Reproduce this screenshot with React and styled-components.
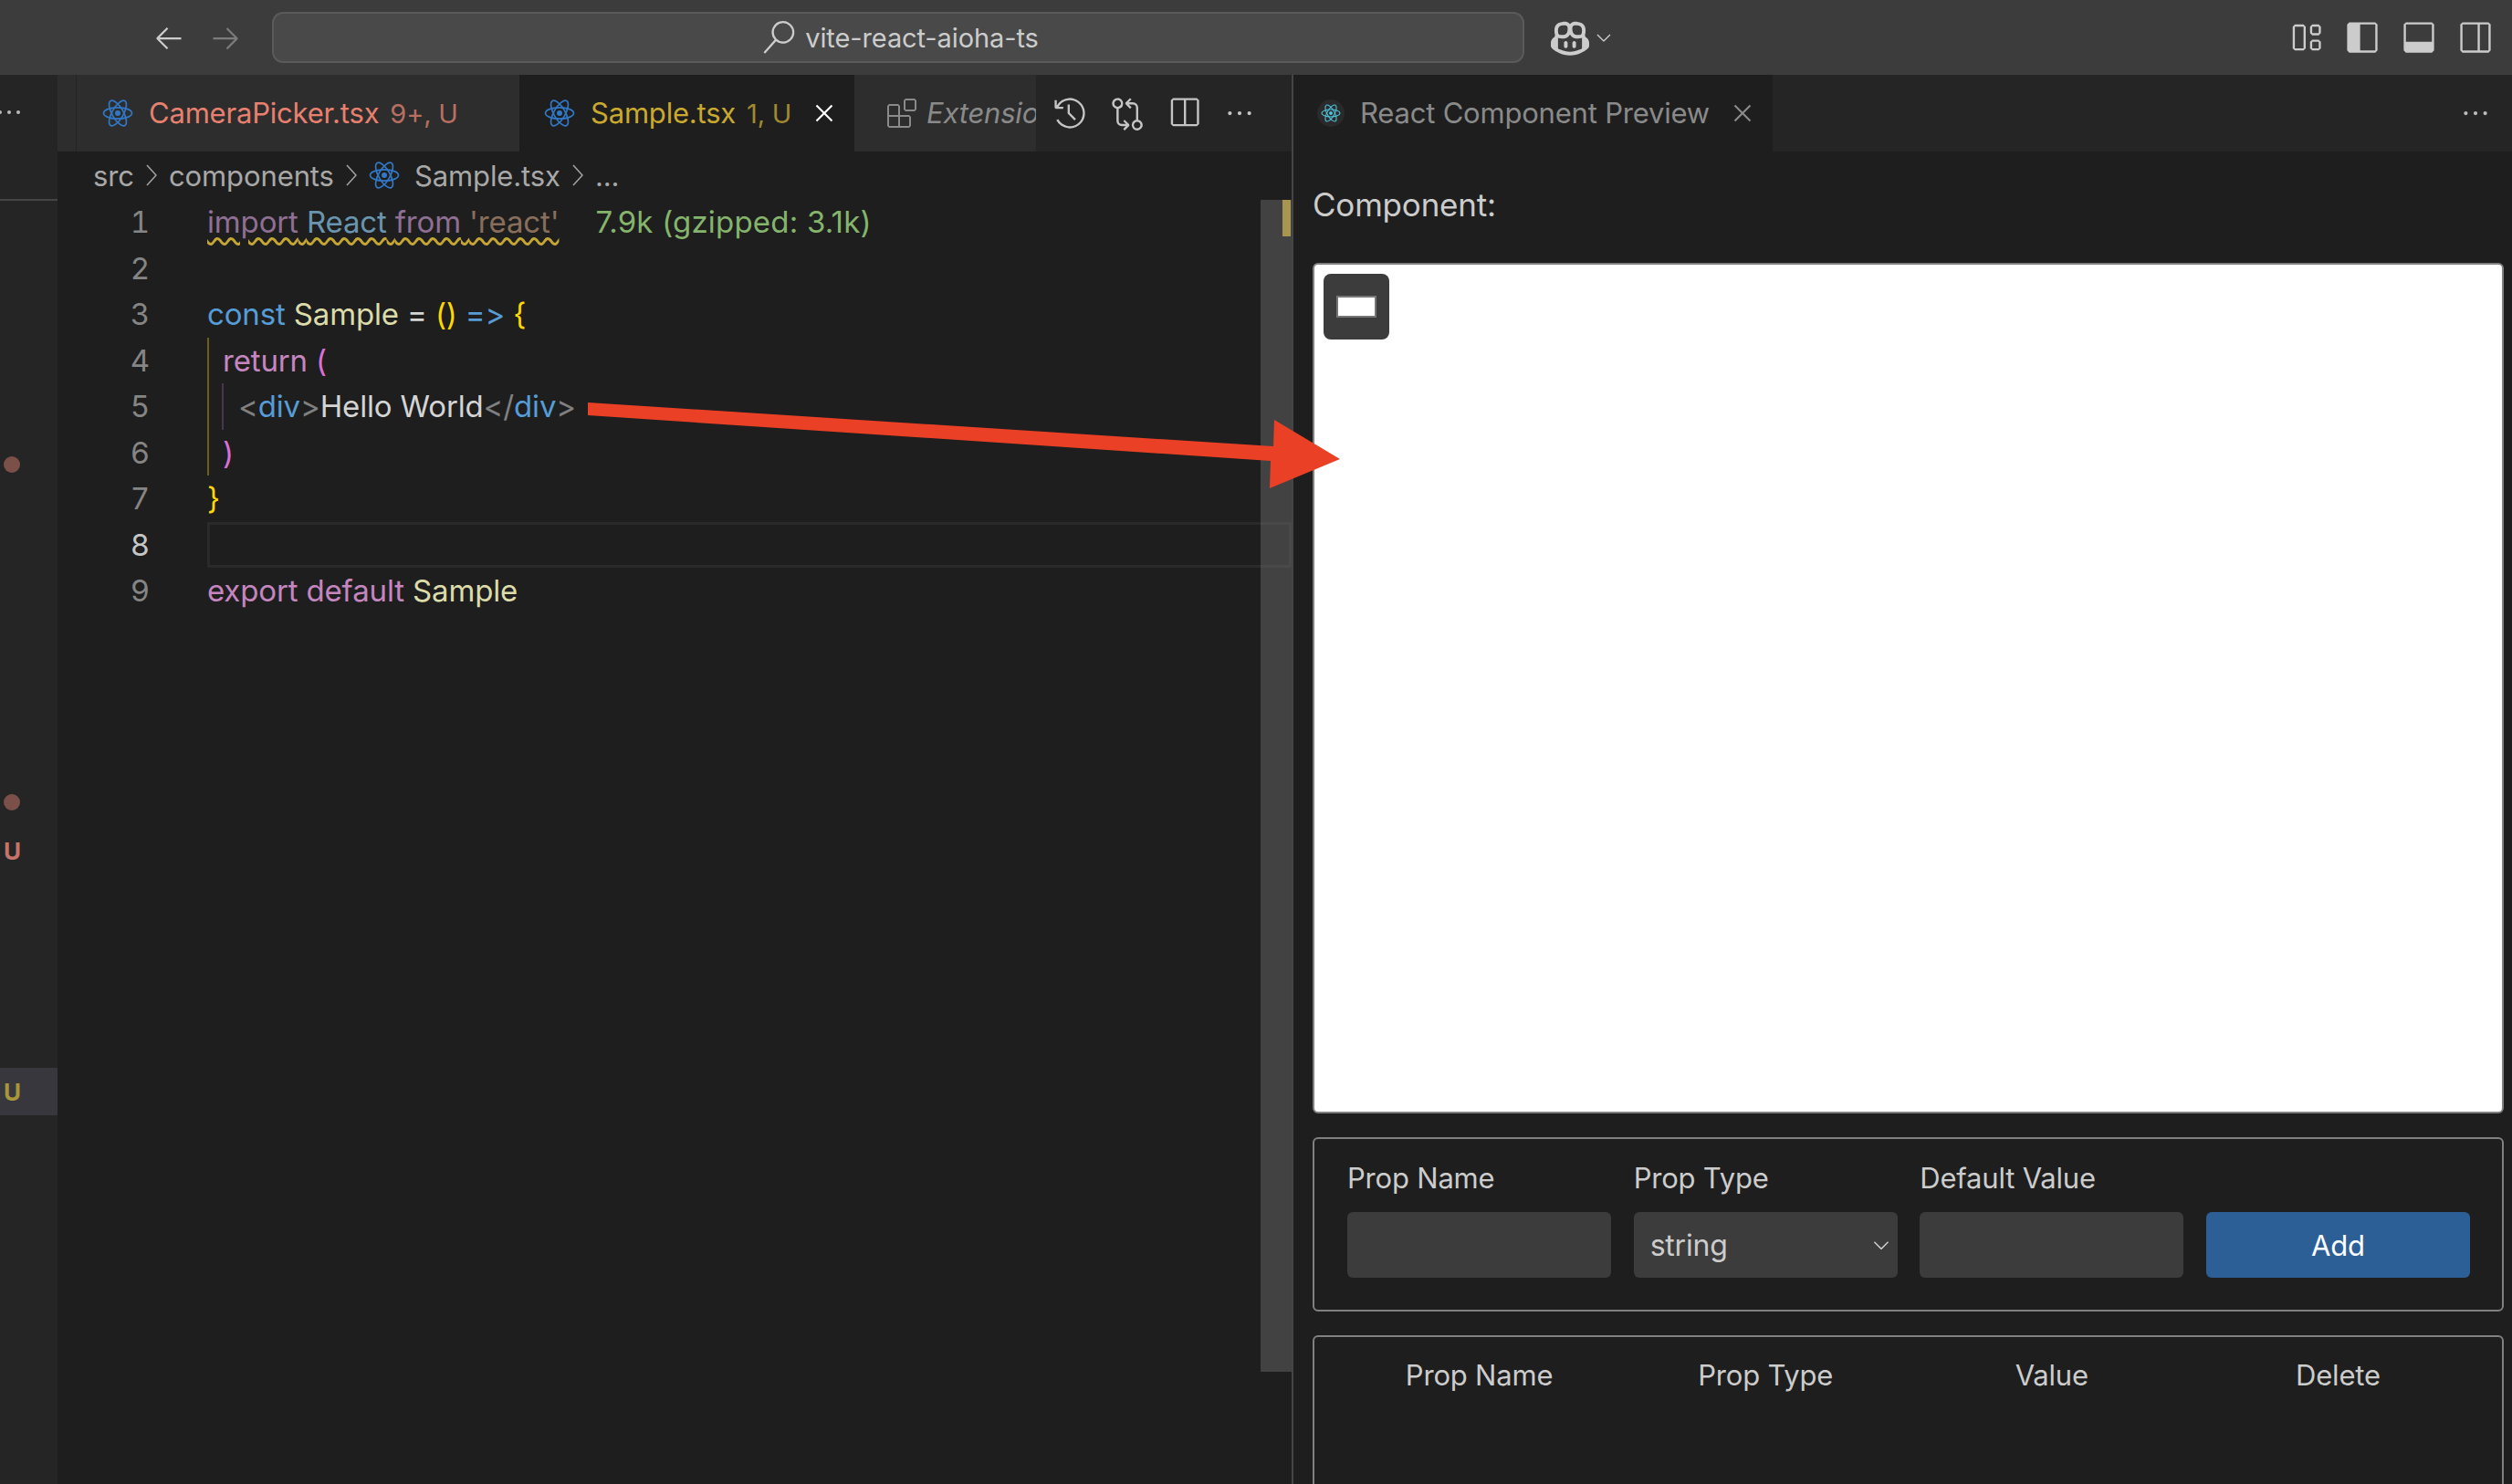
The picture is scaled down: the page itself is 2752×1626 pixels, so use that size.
import React from 'react';
import styled, { createGlobalStyle } from 'styled-components';
import {
  VscArrowLeft,
  VscArrowRight,
  VscSearch,
  VscCopilot,
  VscChevronDown,
  VscLayout,
  VscLayoutSidebarLeft,
  VscLayoutPanel,
  VscLayoutSidebarRightOff,
  VscClose,
  VscExtensions,
  VscHistory,
  VscGitCompare,
  VscSplitHorizontal,
  VscEllipsis
} from 'react-icons/vsc';

const UI_FONT = 'Inter, "Noto Sans", sans-serif';

const GlobalStyle = createGlobalStyle`
  html, body {
    margin: 0;
    padding: 0;
    background: #1e1e1e;
  }
  * {
    box-sizing: border-box;
  }
`;

const ReactIcon = ({ color = '#3178c6', size = 34 }) => (
  <svg width={size} height={size} viewBox="0 0 34 34" fill="none" stroke={color} strokeWidth="1.7">
    <ellipse cx="17" cy="17" rx="15.5" ry="6.2" />
    <ellipse cx="17" cy="17" rx="15.5" ry="6.2" transform="rotate(60 17 17)" />
    <ellipse cx="17" cy="17" rx="15.5" ry="6.2" transform="rotate(120 17 17)" />
    <circle cx="17" cy="17" r="3" fill={color} stroke="none" />
  </svg>
);

const Crumb = () => (
  <svg width="12" height="24" viewBox="0 0 12 24" fill="none" stroke="#a0a0a0" strokeWidth="1.6">
    <polyline points="1,1 11,12 1,23" />
  </svg>
);

const App = () => (
  <Page>
    <GlobalStyle />
    <TitleBar>
      <NavIcon $dim={false}><VscArrowLeft size={36} /></NavIcon>
      <NavIcon $dim><VscArrowRight size={36} /></NavIcon>
      <SearchBox>
        <VscSearch size={36} />
        <span>vite-react-aioha-ts</span>
      </SearchBox>
      <CopilotButton>
        <VscCopilot size={42} />
        <VscChevronDown size={24} />
      </CopilotButton>
      <LayoutIcons>
        <VscLayout size={38} />
        <VscLayoutSidebarLeft size={38} />
        <VscLayoutPanel size={38} />
        <VscLayoutSidebarRightOff size={38} />
      </LayoutIcons>
    </TitleBar>

    <Workbench>
      <Sidebar>
        <SidebarHead>
          <VscEllipsis size={32} />
        </SidebarHead>
        <SidebarMark $top={263}><Dot /></SidebarMark>
        <SidebarMark $top={318}><Dot /></SidebarMark>
        <SidebarMark $top={1} $color="#c4746a">U</SidebarMark>
        <SidebarMark $top={212} $color="#a8963c" $selected>U</SidebarMark>
      </Sidebar>

      <EditorGroup>
        <TabBar>
          <Tab $width={20} />
          <Tab $width={486} $pad={28} $edge>
            <ReactIcon />
            <TabTitle $color="#e8806f">CameraPicker.tsx</TabTitle>
            <TabBadge $color="#b86f62">9+, U</TabBadge>
          </Tab>
          <Tab $width={367} $pad={27} $active>
            <ReactIcon />
            <TabTitle $color="#c9a92f">Sample.tsx</TabTitle>
            <TabBadge $color="#a08a30">1, U</TabBadge>
            <TabClose $color="#fff"><VscClose size={34} /></TabClose>
          </Tab>
          <Tab $width={199} $pad={36}>
            <VscExtensions size={32} color="#8a8a8a" />
            <TabTitle $color="#8a8a8a" $italic $gap={11}>Extensio</TabTitle>
          </Tab>
          <TabActions>
            <VscHistory size={38} />
            <VscGitCompare size={38} />
            <VscSplitHorizontal size={38} />
            <VscEllipsis size={34} />
          </TabActions>
        </TabBar>

        <Breadcrumbs>
          <span>src</span>
          <Crumb />
          <span>components</span>
          <Crumb />
          <ReactIcon />
          <CrumbFile>Sample.tsx</CrumbFile>
          <Crumb />
          <span>...</span>
        </Breadcrumbs>

        <EditorBody>
          <Gutter>
            {[1, 2, 3, 4, 5, 6, 7, 8, 9].map(n => (
              <LineNumber key={n} $current={n === 8}>{n}</LineNumber>
            ))}
          </Gutter>
          <CodeColumn>
            <Line>
              <Squiggle>
                <Tok $c="#8f6f93">import</Tok> <Tok $c="#6a95ae">React</Tok> <Tok $c="#8f6f93">from</Tok> <Tok $c="#8a6e5c">'react'</Tok>
              </Squiggle>
              <BundleSize>7.9k (gzipped: 3.1k)</BundleSize>
            </Line>
            <Line />
            <Line>
              <Tok $c="#569cd6">const</Tok> <Tok $c="#dcdcaa">Sample</Tok> <Tok $c="#d4d4d4">=</Tok> <Tok $c="#ffd700">()</Tok> <Tok $c="#569cd6">=&gt;</Tok> <Tok $c="#ffd700">{'{'}</Tok>
            </Line>
            <IndentBlock $color="#6b5f20">
              <Line>
                <Tok $c="#c586c0">return</Tok> <Tok $c="#da70d6">(</Tok>
              </Line>
              <IndentBlock $color="#4a3550">
                <Line>
                  <Tok $c="#808080">&lt;</Tok><Tok $c="#569cd6">div</Tok><Tok $c="#808080">&gt;</Tok><Tok $c="#d4d4d4">Hello World</Tok><Tok $c="#808080">&lt;/</Tok><Tok $c="#569cd6">div</Tok><Tok $c="#808080">&gt;</Tok>
                </Line>
              </IndentBlock>
              <Line>
                <Tok $c="#da70d6">)</Tok>
              </Line>
            </IndentBlock>
            <Line>
              <Tok $c="#ffd700">{'}'}</Tok>
            </Line>
            <CurrentLine />
            <Line>
              <Tok $c="#c586c0">export default</Tok> <Tok $c="#dcdcaa">Sample</Tok>
            </Line>
          </CodeColumn>
          <Scrollbar>
            <ScrollMarker />
          </Scrollbar>
        </EditorBody>
      </EditorGroup>

      <GroupDivider />

      <PreviewGroup>
        <PreviewTabBar>
          <PreviewTab>
            <PreviewIcon><ReactIcon color="#4fc3dc" size={22} /></PreviewIcon>
            <TabTitle $color="#8a8a8a">React Component Preview</TabTitle>
            <TabClose $color="#8a8a8a"><VscClose size={34} /></TabClose>
          </PreviewTab>
          <PreviewMore><VscEllipsis size={34} /></PreviewMore>
        </PreviewTabBar>

        <PreviewBody>
          <SectionTitle>Component:</SectionTitle>
          <Canvas>
            <RenderedButton>
              <RenderedInner />
            </RenderedButton>
          </Canvas>

          <OutlineBox $height={191} $pad="23px 35px 0 36px">
            <FieldGrid>
              <FieldLabel>Prop Name</FieldLabel>
              <FieldLabel>Prop Type</FieldLabel>
              <FieldLabel>Default Value</FieldLabel>
              <span />
              <TextField />
              <SelectWrap>
                <SelectField defaultValue="string">
                  <option value="string">string</option>
                  <option value="number">number</option>
                  <option value="boolean">boolean</option>
                </SelectField>
                <SelectChevron><VscChevronDown size={26} /></SelectChevron>
              </SelectWrap>
              <TextField />
              <AddButton>Add</AddButton>
            </FieldGrid>
          </OutlineBox>

          <OutlineBox $height={300} $pad="22px 35px 0 36px">
            <FieldGrid>
              <ColumnHead>Prop Name</ColumnHead>
              <ColumnHead>Prop Type</ColumnHead>
              <ColumnHead>Value</ColumnHead>
              <ColumnHead>Delete</ColumnHead>
            </FieldGrid>
          </OutlineBox>
        </PreviewBody>
      </PreviewGroup>
    </Workbench>

    <AnnotationArrow viewBox="0 0 2752 1626">
      <polygon points="644,441 1395,489 1396,460 1468,503 1391,535 1392,505 644,455" fill="#ea4025" />
    </AnnotationArrow>
  </Page>
);

const Page = styled.div`
  position: relative;
  display: flex;
  flex-direction: column;
  width: 2752px;
  height: 1626px;
  overflow: hidden;
  background: #1e1e1e;
  font-family: ${UI_FONT};
  color: #ccc;
`;

const TitleBar = styled.header`
  flex: 0 0 82px;
  display: flex;
  align-items: center;
  padding-left: 167px;
  background: #3c3c3c;
`;

const NavIcon = styled.div`
  display: flex;
  margin-right: 26px;
  color: ${props => (props.$dim ? '#7c7c7c' : '#cccccc')};
`;

const SearchBox = styled.div`
  display: flex;
  align-items: center;
  justify-content: center;
  gap: 11px;
  width: 1372px;
  height: 56px;
  margin-left: 7px;
  padding-left: 5px;
  border: 2px solid #5a5a5a;
  border-radius: 12px;
  background: #494949;
  font-size: 29px;
  letter-spacing: -0.1px;
  color: #ccc;
`;

const CopilotButton = styled.div`
  display: flex;
  align-items: center;
  gap: 4px;
  margin-left: 29px;
  color: #ccc;
`;

const LayoutIcons = styled.div`
  display: flex;
  align-items: center;
  gap: 24px;
  margin-left: auto;
  padding-right: 21px;
  color: #ccc;
`;

const Workbench = styled.div`
  flex: 1;
  display: flex;
  min-height: 0;
`;

const Sidebar = styled.aside`
  flex: 0 0 63px;
  display: flex;
  flex-direction: column;
  background: #252525;
`;

const SidebarHead = styled.div`
  height: 138px;
  padding-top: 25px;
  margin-left: -6px;
  border-bottom: 2px solid #454545;
  color: #bbb;
`;

const SidebarMark = styled.div`
  display: flex;
  align-items: center;
  height: 52px;
  margin-top: ${props => props.$top}px;
  padding-left: 4px;
  background: ${props => (props.$selected ? '#37373d' : 'transparent')};
  color: ${props => props.$color || '#ccc'};
  font-size: 26px;
  font-weight: 700;
`;

const Dot = styled.span`
  width: 18px;
  height: 18px;
  border-radius: 50%;
  background: #7a5048;
`;

const EditorGroup = styled.section`
  flex: 0 0 1352px;
  display: flex;
  flex-direction: column;
  min-width: 0;
`;

const TabBar = styled.div`
  flex: 0 0 84px;
  display: flex;
  background: #252525;
`;

const Tab = styled.div`
  flex: 0 0 ${props => props.$width}px;
  display: flex;
  align-items: center;
  overflow: hidden;
  padding-left: ${props => props.$pad || 0}px;
  background: ${props => (props.$active ? '#1e1e1e' : '#2d2d2d')};
  border-left: ${props => (props.$edge ? '1px solid #252525' : 'none')};
  white-space: nowrap;

  svg {
    flex-shrink: 0;
  }
`;

const TabTitle = styled.span`
  margin-left: ${props => props.$gap || 17}px;
  font-size: 31px;
  line-height: 40px;
  margin-top: -1px;
  letter-spacing: -0.2px;
  white-space: nowrap;
  font-style: ${props => (props.$italic ? 'italic' : 'normal')};
  color: ${props => props.$color};
`;

const TabBadge = styled.span`
  margin-left: 12px;
  font-size: 29px;
  letter-spacing: -0.2px;
  color: ${props => props.$color};
`;

const TabClose = styled.span`
  display: flex;
  margin-left: 19px;
  color: ${props => props.$color};
`;

const TabActions = styled.div`
  flex: 1;
  display: flex;
  align-items: center;
  gap: 24.5px;
  padding-left: 18px;
  color: #c5c5c5;
`;

const Breadcrumbs = styled.nav`
  flex: 0 0 52px;
  display: flex;
  align-items: center;
  gap: 13px;
  padding-left: 39px;
  font-size: 31px;
  letter-spacing: -0.1px;
  color: #a8a8a8;
`;

const CrumbFile = styled.span`
  margin-left: 3px;
`;

const EditorBody = styled.div`
  position: relative;
  flex: 1;
  display: flex;
  min-height: 0;
  font-size: 33px;
  letter-spacing: -0.15px;
`;

const Gutter = styled.div`
  flex: 0 0 101px;
  margin-right: 63px;
  font-variant-numeric: tabular-nums;
`;

const LineNumber = styled.div`
  height: 50.5px;
  line-height: 50.5px;
  text-align: right;
  color: ${props => (props.$current ? '#c6c6c6' : '#858585')};
`;

const CodeColumn = styled.div`
  flex: 1;
  min-width: 0;
`;

const Line = styled.div`
  height: 50.5px;
  line-height: 50.5px;
  white-space: pre;
`;

const CurrentLine = styled.div`
  height: 50.5px;
  border: 3px solid #2a2a2a;
`;

const IndentBlock = styled.div`
  padding-left: 15px;
  border-left: 2px solid ${props => props.$color};

  & & {
    margin-left: -1px;
    padding-left: 16px;
  }
`;

const Tok = styled.span`
  color: ${props => props.$c};
`;

const Squiggle = styled.span`
  text-decoration: underline wavy #c4a535 2.5px;
  text-underline-offset: 5px;
`;

const BundleSize = styled.span`
  margin-left: 40px;
  letter-spacing: 0.2px;
  color: #85b56c;
`;

const Scrollbar = styled.div`
  position: absolute;
  top: 1px;
  right: 0;
  width: 34px;
  height: 1284px;
  background: rgba(121, 121, 121, 0.4);
`;

const ScrollMarker = styled.div`
  width: 9px;
  height: 40px;
  margin-left: 24px;
  background: #a89550;
`;

const GroupDivider = styled.div`
  flex: 0 0 2px;
  background: #454545;
`;

const PreviewGroup = styled.section`
  flex: 1;
  display: flex;
  flex-direction: column;
  min-width: 0;
`;

const PreviewTabBar = styled.div`
  flex: 0 0 84px;
  display: flex;
  align-items: center;
  background: #252525;
`;

const PreviewTab = styled.div`
  flex: 0 0 525px;
  align-self: stretch;
  display: flex;
  align-items: center;
  padding-left: 26px;
  background: #1e1e1e;
`;

const PreviewIcon = styled.span`
  display: flex;
  align-items: center;
  justify-content: center;
  width: 30px;
  height: 30px;
  border-radius: 50%;
  background: #2a2a2a;
`;

const PreviewMore = styled.div`
  display: flex;
  margin-left: auto;
  padding-right: 23px;
  color: #bbb;
`;

const PreviewBody = styled.div`
  flex: 1;
  display: flex;
  flex-direction: column;
  gap: 26px;
  padding: 0 9px 0 21px;
  overflow: hidden;
`;

const SectionTitle = styled.h2`
  margin: 39px 0 19px;
  font-size: 35px;
  font-weight: 400;
  line-height: 38px;
  letter-spacing: -0.2px;
  color: #ccc;
`;

const Canvas = styled.div`
  flex: 0 0 932px;
  padding: 10px;
  border: 2px solid #808080;
  border-radius: 6px;
  background: #fff;
`;

const RenderedButton = styled.button`
  display: flex;
  align-items: center;
  justify-content: center;
  width: 72px;
  height: 72px;
  padding: 0;
  border: none;
  border-radius: 8px;
  background: #3c3c3c;
`;

const RenderedInner = styled.span`
  width: 44px;
  height: 24px;
  border: 2px solid #767676;
  background: #fff;
`;

const OutlineBox = styled.div`
  flex: 0 0 ${props => props.$height}px;
  padding: ${props => props.$pad};
  border: 2px solid #808080;
  border-radius: 6px;
`;

const FieldGrid = styled.div`
  display: grid;
  grid-template-columns: repeat(4, 1fr);
  column-gap: 24.5px;
  row-gap: 17px;
`;

const FieldLabel = styled.label`
  font-size: 31px;
  line-height: 40px;
  letter-spacing: -0.2px;
  color: #ccc;
`;

const ColumnHead = styled.div`
  font-size: 31px;
  line-height: 40px;
  letter-spacing: -0.2px;
  text-align: center;
  color: #ccc;
`;

const TextField = styled.input`
  height: 72px;
  min-width: 0;
  border: none;
  border-radius: 6px;
  background: #3c3c3c;
`;

const SelectWrap = styled.div`
  position: relative;
  height: 72px;
`;

const SelectField = styled.select`
  appearance: none;
  width: 100%;
  height: 100%;
  padding-left: 18px;
  border: none;
  border-radius: 6px;
  background: #3c3c3c;
  font-family: ${UI_FONT};
  font-size: 32px;
  letter-spacing: -0.2px;
  color: #ccc;
`;

const SelectChevron = styled.span`
  position: absolute;
  top: 23px;
  right: 5px;
  display: flex;
  color: #ccc;
`;

const AddButton = styled.button`
  height: 72px;
  border: none;
  border-radius: 6px;
  background: #2c5f96;
  font-family: ${UI_FONT};
  font-size: 31px;
  font-weight: 400;
  letter-spacing: -0.2px;
  color: #fff;
`;

const AnnotationArrow = styled.svg`
  position: absolute;
  top: 0;
  left: 0;
  width: 2752px;
  height: 1626px;
  pointer-events: none;
`;

export default App;
